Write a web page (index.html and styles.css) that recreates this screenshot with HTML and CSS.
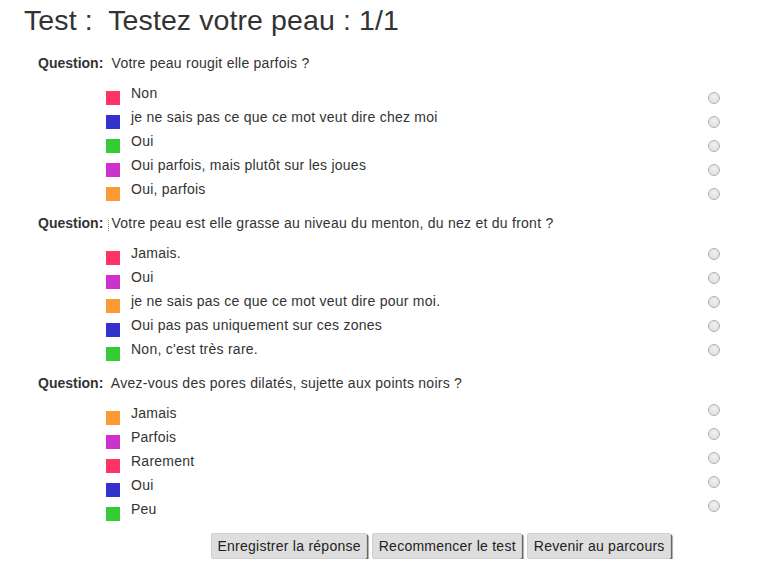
FILE: index.html
```html
<!DOCTYPE html>
<html lang="fr">
<head>
    <meta charset="UTF-8">
    <title>Test : Testez votre peau</title>
    <link rel="stylesheet" href="styles.css">
</head>
<body>
    <h1 class="title">Test :&nbsp; Testez votre peau : 1/1</h1>

    <form class="quiz">
        <div class="question">
            <div class="q-label"><b>Question:</b>&nbsp; Votre peau rougit elle parfois ?</div>
            <ul class="answers radio-low">
                <li><span class="swatch pink"></span><span class="answer-text">Non</span><input type="radio" name="q1"></li>
                <li><span class="swatch blue"></span><span class="answer-text">je ne sais pas ce que ce mot veut dire chez moi</span><input type="radio" name="q1"></li>
                <li><span class="swatch green"></span><span class="answer-text">Oui</span><input type="radio" name="q1"></li>
                <li><span class="swatch magenta"></span><span class="answer-text">Oui parfois, mais plutôt sur les joues</span><input type="radio" name="q1"></li>
                <li><span class="swatch orange"></span><span class="answer-text">Oui, parfois</span><input type="radio" name="q1"></li>
            </ul>
        </div>

        <div class="question">
            <div class="q-label"><b>Question:</b> <span class="caret"></span>Votre peau est elle grasse au niveau du menton, du nez et du front ?</div>
            <ul class="answers radio-mid">
                <li><span class="swatch pink"></span><span class="answer-text">Jamais.</span><input type="radio" name="q2"></li>
                <li><span class="swatch magenta"></span><span class="answer-text">Oui</span><input type="radio" name="q2"></li>
                <li><span class="swatch orange"></span><span class="answer-text">je ne sais pas ce que ce mot veut dire pour moi.</span><input type="radio" name="q2"></li>
                <li><span class="swatch blue"></span><span class="answer-text">Oui pas pas uniquement sur ces zones</span><input type="radio" name="q2"></li>
                <li><span class="swatch green"></span><span class="answer-text">Non, c'est très rare.</span><input type="radio" name="q2"></li>
            </ul>
        </div>

        <div class="question">
            <div class="q-label"><b>Question:</b>&nbsp; Avez-vous des pores dilatés, sujette aux points noirs ?</div>
            <ul class="answers radio-high">
                <li><span class="swatch orange"></span><span class="answer-text">Jamais</span><input type="radio" name="q3"></li>
                <li><span class="swatch magenta"></span><span class="answer-text">Parfois</span><input type="radio" name="q3"></li>
                <li><span class="swatch pink"></span><span class="answer-text">Rarement</span><input type="radio" name="q3"></li>
                <li><span class="swatch blue"></span><span class="answer-text">Oui</span><input type="radio" name="q3"></li>
                <li><span class="swatch green"></span><span class="answer-text">Peu</span><input type="radio" name="q3"></li>
            </ul>
        </div>

        <div class="actions">
            <button type="submit">Enregistrer la réponse</button>
            <button type="button">Recommencer le test</button>
            <button type="button">Revenir au parcours</button>
        </div>
    </form>
</body>
</html>
```

FILE: styles.css
```css
body { margin: 0; font-family: "Liberation Sans", Arial, sans-serif; font-size: 14px; letter-spacing: 0.25px; color: #333; background: #fff; }
.title { margin: 4px 0 15px 24px; font-size: 28.5px; letter-spacing: 0.1px; line-height: 32px; font-weight: normal; color: #333; }
.question { margin-bottom: 10px; }
.q-label { padding-left: 38px; line-height: 24px; margin-bottom: 6px; }
.q-label b { color: #333; letter-spacing: 0; }
.caret { display: inline-block; width: 0; height: 11px; border-left: 1px dotted #888; margin: 0 2px 0 1px; vertical-align: -3px; }
.answers { list-style: none; margin: 0; padding: 0 52px 0 106px; }
.answers li { display: flex; align-items: flex-start; height: 24px; line-height: 24px; }
.swatch { width: 14px; height: 14px; margin-top: 10px; flex: none; }
.answer-text { margin-left: 11px; }
.pink { background: #ff3366; }
.blue { background: #3333cc; }
.green { background: #33cc33; }
.magenta { background: #cc33cc; }
.orange { background: #ff9933; }
.answers input { appearance: none; -webkit-appearance: none; margin: 11px 0 0 auto; width: 12px; height: 12px; border-radius: 50%; border: 1px solid #b2b2b2; background: radial-gradient(circle at 50% 40%, #f0f0f0, #dcdcdc); box-sizing: border-box; flex: none; }
.radio-mid input { margin-top: 7px; }
.radio-high input { margin-top: 3px; }
.actions { display: flex; gap: 5px; padding: 2px 0 0 211px; }
.actions button { font-family: "Liberation Sans", Arial, sans-serif; font-size: 14px; letter-spacing: 0.25px; color: #222; background: #dedede; border: 1px solid #cfcfcf; border-radius: 2px; padding: 4px 5.5px; height: 26px; line-height: 16px; box-shadow: 1px 1px 0 #666, 2px 2px 1px #aaa; cursor: pointer; }
```
